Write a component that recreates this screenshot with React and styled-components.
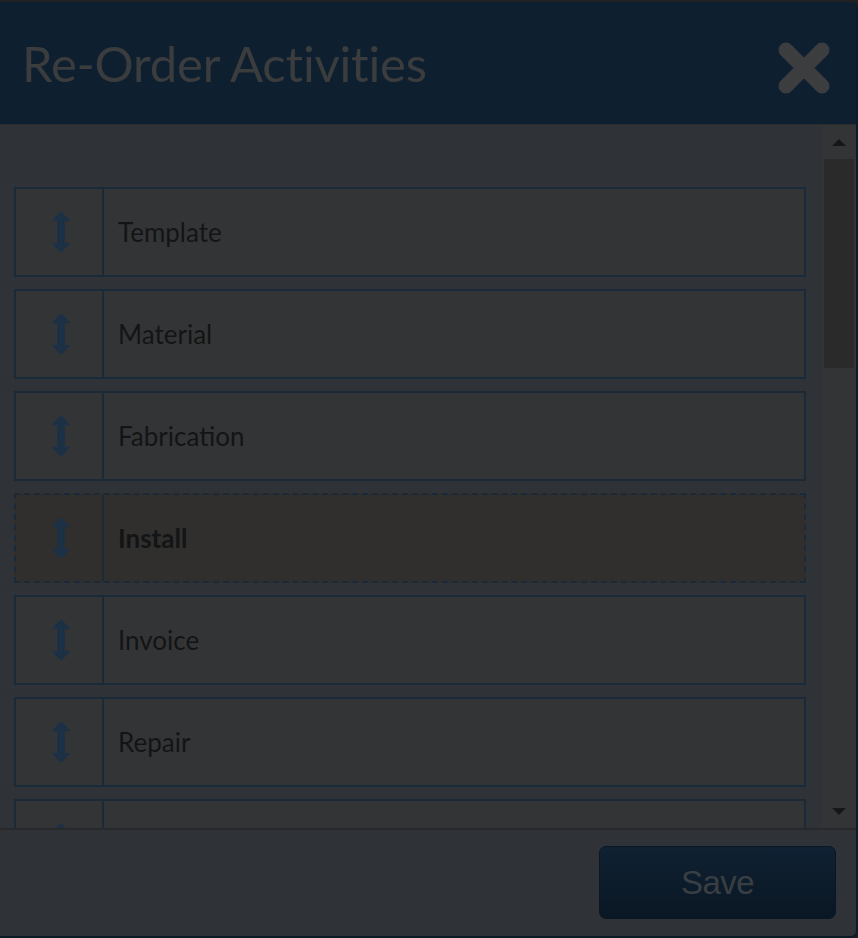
import styled, { createGlobalStyle } from 'styled-components';

const GlobalStyle = createGlobalStyle`
    html, body {
        margin: 0;
        padding: 0;
        background: #1f2123;
        overflow: hidden;
    }
    * {
        box-sizing: border-box;
    }
`;

const Modal = styled.div`
    margin-top: 2px;
    width: 858px;
    height: 936px;
    display: flex;
    flex-direction: column;
    background: #2f3236;
    border-right: 2px solid #0d1b29;
    border-bottom: 2px solid #0d1b29;
    border-radius: 0 7px 7px 0;
    overflow: hidden;
`;

const Header = styled.header`
    flex: 0 0 123px;
    display: flex;
    align-items: center;
    justify-content: space-between;
    padding: 0 24px 0 22px;
    background: #0e1f2f;
    border-bottom: 1px solid #2a2c2f;
`;

const Title = styled.h1`
    margin: 0;
    font-family: Lato, 'Noto Sans', sans-serif;
    font-weight: 400;
    font-size: 49px;
    color: #3a3c3e;
    letter-spacing: -0.2px;
`;

const CloseButton = styled.button`
    width: 56px;
    height: 56px;
    margin-top: 10px;
    padding: 0;
    border: 0;
    background: none;
    display: flex;
    align-items: center;
    justify-content: center;
`;

const Body = styled.div`
    flex: 1;
    display: flex;
    min-height: 0;
`;

const List = styled.ul`
    flex: 1;
    margin: 0;
    padding: 62px 16px 0 14px;
    list-style: none;
    overflow: hidden;
`;

const Row = styled.li`
    height: 90px;
    margin-bottom: 12px;
    display: flex;
    border: 2px ${p => (p.$placeholder ? 'dashed' : 'solid')} #1b2a39;
    background: ${p => (p.$placeholder ? '#302f2d' : '#333436')};
`;

const Handle = styled.div`
    flex: 0 0 88px;
    display: flex;
    align-items: center;
    justify-content: center;
    padding-left: 3px;
    border-right: 2px solid #1b2a39;
`;

const Label = styled.span`
    display: flex;
    align-items: center;
    padding-left: 14px;
    font-family: Lato, 'Noto Sans', sans-serif;
    font-size: 26px;
    font-weight: ${p => (p.$bold ? 700 : 400)};
    color: #131415;
`;

const ScrollBar = styled.div`
    flex: 0 0 34px;
    display: flex;
    flex-direction: column;
    background: #333436;
`;

const ScrollArrow = styled.div`
    flex: 0 0 34px;
    display: flex;
    align-items: center;
    justify-content: center;

    &::before {
        content: '';
        border-left: 7px solid transparent;
        border-right: 7px solid transparent;
        ${p => (p.$down ? 'border-top' : 'border-bottom')}: 7px solid #161616;
    }
`;

const ScrollTrack = styled.div`
    flex: 1;
    padding: 0 2px;
`;

const Thumb = styled.div`
    height: 209px;
    background: #2a2a2b;
`;

const Footer = styled.footer`
    flex: 0 0 108px;
    display: flex;
    justify-content: flex-end;
    align-items: flex-start;
    padding: 16px 20px 0;
    border-top: 2px solid #28292b;
`;

const SaveButton = styled.button`
    width: 237px;
    height: 73px;
    border: 1px solid #0a1622;
    border-radius: 7px;
    background: linear-gradient(#0f2132, #0a1724);
    font-family: 'Liberation Sans', Arial, sans-serif;
    font-size: 33px;
    color: #393e43;
    letter-spacing: -0.5px;
`;

// the last row is only partly scrolled into view, its label sits below the fold
const activities = ['Template', 'Material', 'Fabrication', 'Install', 'Invoice', 'Repair', ''];

function DragIcon() {
    return (
        <svg width="18" height="42" viewBox="0 0 18 42">
            <path
                d="M9 1 L17 9.5 L12 9.5 L12 32.5 L17 32.5 L9 41 L1 32.5 L6 32.5 L6 9.5 L1 9.5 Z"
                fill="#1d3146"
                stroke="#1d3146"
                strokeWidth="1.5"
                strokeLinejoin="round"
            />
        </svg>
    );
}

function App() {
    return (
        <>
            <GlobalStyle />
            <Modal>
                <Header>
                    <Title>Re-Order Activities</Title>
                    <CloseButton aria-label="Close">
                        <svg width="54" height="54" viewBox="0 0 54 54">
                            <path d="M9 9 L45 45 M45 9 L9 45" stroke="#3c3d3f" strokeWidth="15" strokeLinecap="round" />
                        </svg>
                    </CloseButton>
                </Header>

                <Body>
                    <List>
                        {activities.map((name, i) => (
                            <Row key={i} $placeholder={name === 'Install'}>
                                <Handle>
                                    <DragIcon />
                                </Handle>
                                <Label $bold={name === 'Install'}>{name}</Label>
                            </Row>
                        ))}
                    </List>
                    <ScrollBar>
                        <ScrollArrow />
                        <ScrollTrack>
                            <Thumb />
                        </ScrollTrack>
                        <ScrollArrow $down />
                    </ScrollBar>
                </Body>

                <Footer>
                    <SaveButton>Save</SaveButton>
                </Footer>
            </Modal>
        </>
    );
}

export default App;
